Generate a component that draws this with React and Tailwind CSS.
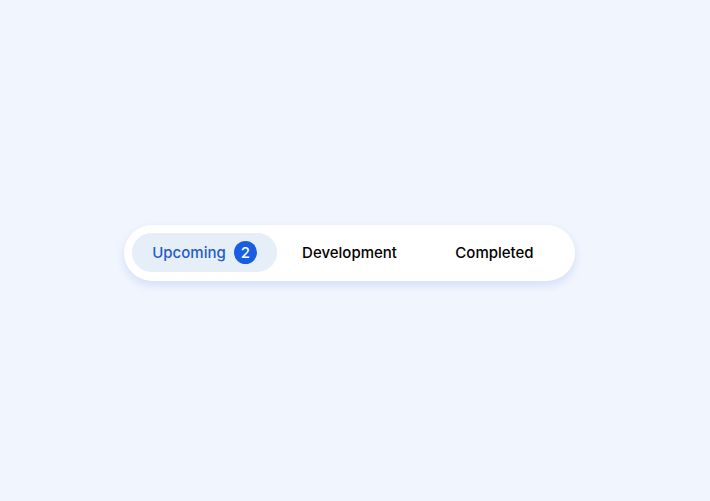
import React, { useState } from 'react';
import clsx from 'clsx';

const tabs = [
  { id: 'upcoming', label: 'Upcoming', count: 2 },
  { id: 'development', label: 'Development' },
  { id: 'completed', label: 'Completed' },
];

const App = () => {
  const [active, setActive] = useState('upcoming');

  return (
    <main className="min-h-screen flex items-center justify-center bg-[#f0f5fe] pr-[11px] pt-1 font-['Inter',sans-serif]">
      <div
        role="tablist"
        aria-label="Projects"
        className="flex rounded-full bg-white px-2 pt-2 pb-[9px] shadow-[0_4px_8px_rgba(24,80,200,0.13)]"
      >
        {tabs.map((tab) => (
          <button
            key={tab.id}
            type="button"
            role="tab"
            aria-selected={active === tab.id}
            onClick={() => setActive(tab.id)}
            className={clsx(
              'flex h-[39px] min-w-[145px] items-center justify-center gap-2 rounded-full text-[15px] font-medium cursor-pointer',
              active === tab.id ? 'bg-[#e6eef8] text-[#1f5cc8]' : 'text-black'
            )}
          >
            <span className="pt-0.5">{tab.label}</span>
            {tab.count && (
              <span
                className={clsx(
                  'flex size-[23px] items-center justify-center rounded-full pt-0.5',
                  active === tab.id ? 'bg-[#185ee0] text-white' : 'bg-[#e6eef8]'
                )}
              >
                {tab.count}
              </span>
            )}
          </button>
        ))}
      </div>
    </main>
  );
};

export default App;
